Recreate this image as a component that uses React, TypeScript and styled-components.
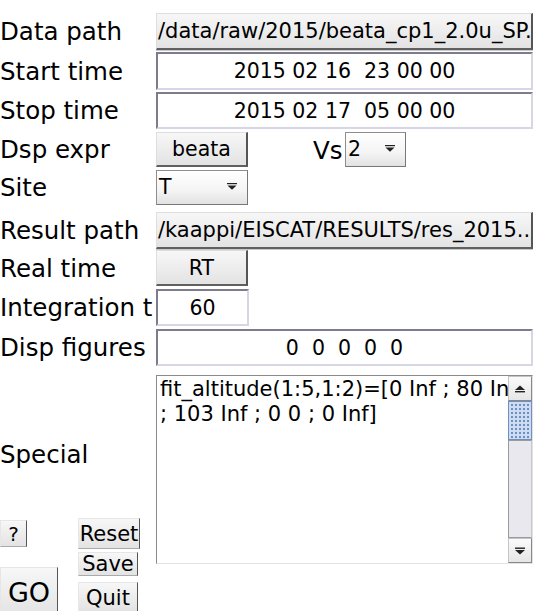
import React from "react";
import styled, { createGlobalStyle, css } from "styled-components";

const Global = createGlobalStyle`
  html, body { margin: 0; padding: 0; background: #ffffff; overflow: hidden; }
  body { font-family: "DejaVu Sans", "Liberation Sans", sans-serif; color: #000; }
`;

const Page = styled.div`
  width: 549px;
  height: 611px;
  overflow: hidden;
  padding-top: 13px;
  box-sizing: border-box;
  display: flex;
  flex-direction: column;
`;

const Row = styled.div<{ $h: number; $gap?: number }>`
  display: grid;
  grid-template-columns: 156px 377px;
  height: ${(p) => p.$h}px;
  margin-top: ${(p) => p.$gap ?? 0}px;
  flex-shrink: 0;
`;

const Label = styled.div`
  font-size: 24.5px;
  line-height: 28px;
  white-space: nowrap;
  overflow: hidden;
  align-self: center;
  margin-top: 1px;
`;

const Controls = styled.div`
  display: flex;
  align-items: stretch;
  min-width: 0;
`;

const buttonLook = css`
  box-sizing: border-box;
  background: linear-gradient(#f7f7f7, #e3e3e3);
  border-top: 1px solid #dedede;
  border-left: 1px solid #dedede;
  border-right: 2px solid #555;
  border-bottom: 2px solid #606060;
  font-family: "DejaVu Sans", "Liberation Sans", sans-serif;
  color: #000;
  padding: 0;
  white-space: nowrap;
  overflow: hidden;
`;

const WideButton = styled.div`
  ${buttonLook}
  width: 377px;
  font-size: 21px;
  line-height: 34px;
  padding-left: 1px;
  text-align: left;
  box-shadow: 0 1px 0 #c8c8c8;
`;

const SmallButton = styled.div<{ $w: number }>`
  ${buttonLook}
  width: ${(p) => p.$w}px;
  font-size: 20.5px;
  display: flex;
  align-items: center;
  justify-content: center;
`;

const Edit = styled.div<{ $w: number }>`
  box-sizing: border-box;
  width: ${(p) => p.$w}px;
  background: #fff;
  border-top: 2px solid #7c7c8c;
  border-left: 2px solid #7c7c8c;
  border-right: 2px solid #d6d6e4;
  border-bottom: 2px solid #d6d6e4;
  font-size: 20.5px;
  display: flex;
  align-items: center;
  justify-content: center;
  white-space: pre;
  overflow: hidden;
`;

const Popup = styled.div<{ $w: number }>`
  box-sizing: border-box;
  width: ${(p) => p.$w}px;
  background: linear-gradient(#ffffff, #f4f4f4 60%, #e2e2e2);
  border: 1px solid #8e8e8e;
  border-right-color: #777;
  border-bottom-color: #777;
  font-size: 20.5px;
  display: flex;
  align-items: center;
  justify-content: space-between;
  padding: 0 10px 2px 2px;
`;

const VsLabel = styled.div`
  font-size: 24.5px;
  line-height: 28px;
  align-self: center;
  margin-left: 65px;
  margin-right: 2px;
  width: 30px;
  margin-top: 2px;
`;

const Special = styled.div`
  display: grid;
  grid-template-columns: 156px 377px;
  margin-top: 9px;
  flex-shrink: 0;
`;

const LeftStack = styled.div`
  display: flex;
  flex-direction: column;
`;

const SpecialLabel = styled.div`
  font-size: 24.5px;
  line-height: 28px;
  margin-top: 66px;
`;

const Cluster = styled.div`
  display: grid;
  grid-template-columns: 58px 62px;
  column-gap: 20px;
  margin-top: 49px;
`;

const ClusterCol = styled.div`
  display: flex;
  flex-direction: column;
  align-items: flex-start;
`;

const MiniButton = styled.div<{ $w: number; $h: number; $gap?: number; $size?: number; $pad?: number }>`
  ${buttonLook}
  width: ${(p) => p.$w}px;
  height: ${(p) => p.$h}px;
  margin-top: ${(p) => p.$gap ?? 0}px;
  font-size: ${(p) => p.$size ?? 21}px;
  padding-top: ${(p) => p.$pad ?? 0}px;
  border-top-color: #e6e6e6;
  border-left-color: #e6e6e6;
  border-right: 1px solid #555;
  border-bottom: 1px solid #aaa;
  display: flex;
  align-items: center;
  justify-content: center;
`;

const TextArea = styled.div`
  box-sizing: border-box;
  height: 189px;
  width: 377px;
  background: #fff;
  border-top: 1px solid #8a8a8a;
  border-left: 1px solid #8a8a8a;
  border-right: 1px solid #e2e2e8;
  border-bottom: 1px solid #e2e2e8;
  display: flex;
`;

const TextBody = styled.div`
  flex: 1;
  min-width: 0;
  overflow: hidden;
  font-size: 21px;
  line-height: 25px;
  padding: 1px 0 0 3px;
  white-space: pre;
`;

const Scrollbar = styled.div`
  width: 24px;
  display: flex;
  flex-direction: column;
  background: #fff;
`;

const ArrowButton = styled.div`
  box-sizing: border-box;
  height: 25px;
  background: linear-gradient(#fafafa, #e6e6e6);
  border: 1px solid #c4c4c4;
  border-right-color: #888;
  border-bottom-color: #888;
  display: flex;
  align-items: center;
  justify-content: center;
`;

const Thumb = styled.div`
  box-sizing: border-box;
  height: 39px;
  border: 1px solid #6f8fbf;
  background-color: #cddcf0;
  background-image: radial-gradient(#6d8fc4 0.9px, transparent 1.1px);
  background-size: 4px 4px;
  background-position: 1px 1px;
`;

const Track = styled.div`
  flex: 1;
  box-sizing: border-box;
  background: #e8e8ee;
  border: 1px solid #9a9a9a;
  border-right-color: #c8c8c8;
`;

const PopArrow = () => (
  <svg width="10" height="7" viewBox="0 0 10 7">
    <rect x="0" y="0" width="10" height="1.2" fill="#222" />
    <polygon points="0.5,2.5 9.5,2.5 5,6.8" fill="#222" />
  </svg>
);

const ScrollArrow = ({ up }: { up?: boolean }) => (
  <svg width="12" height="8" viewBox="0 0 12 8">
    {up ? (
      <>
        <polygon points="1,5 11,5 6,0.5" fill="#222" />
        <rect x="1" y="6" width="10" height="1.4" fill="#222" />
      </>
    ) : (
      <>
        <rect x="1" y="0.5" width="10" height="1.4" fill="#222" />
        <polygon points="1,3 11,3 6,7.5" fill="#222" />
      </>
    )}
  </svg>
);

export default function App() {
  return (
    <>
      <Global />
      <Page>
        <Row $h={37}>
          <Label>Data path</Label>
          <Controls>
            <WideButton>/data/raw/2015/beata_cp1_2.0u_SP.</WideButton>
          </Controls>
        </Row>
        <Row $h={38} $gap={2}>
          <Label>Start time</Label>
          <Controls>
            <Edit $w={377}>{"2015 02 16  23 00 00"}</Edit>
          </Controls>
        </Row>
        <Row $h={37} $gap={2}>
          <Label>Stop time</Label>
          <Controls>
            <Edit $w={377}>{"2015 02 17  05 00 00"}</Edit>
          </Controls>
        </Row>
        <Row $h={35} $gap={3}>
          <Label>Dsp expr</Label>
          <Controls>
            <SmallButton $w={92}>beata</SmallButton>
            <VsLabel>Vs</VsLabel>
            <Popup $w={61}>
              <span>2</span>
              <PopArrow />
            </Popup>
          </Controls>
        </Row>
        <Row $h={35} $gap={3}>
          <Label>Site</Label>
          <Controls>
            <Popup $w={92}>
              <span>T</span>
              <PopArrow />
            </Popup>
          </Controls>
        </Row>
        <Row $h={37} $gap={7}>
          <Label>Result path</Label>
          <Controls>
            <WideButton>/kaappi/EISCAT/RESULTS/res_2015..</WideButton>
          </Controls>
        </Row>
        <Row $h={36} $gap={1}>
          <Label>Real time</Label>
          <Controls>
            <SmallButton $w={92}>RT</SmallButton>
          </Controls>
        </Row>
        <Row $h={37} $gap={3}>
          <Label>Integration t</Label>
          <Controls>
            <Edit $w={93}>60</Edit>
          </Controls>
        </Row>
        <Row $h={37} $gap={3}>
          <Label>Disp figures</Label>
          <Controls>
            <Edit $w={377}>{"0  0  0  0  0"}</Edit>
          </Controls>
        </Row>
        <Special>
          <LeftStack>
            <SpecialLabel>Special</SpecialLabel>
            <Cluster>
              <ClusterCol>
                <MiniButton $w={27} $h={27} $gap={2} $size={20}>?</MiniButton>
                <MiniButton $w={58} $h={50} $gap={20} $size={27}>GO</MiniButton>
              </ClusterCol>
              <ClusterCol>
                <MiniButton $w={62} $h={31}>Reset</MiniButton>
                <MiniButton $w={60} $h={24} $gap={3}>Save</MiniButton>
                <MiniButton $w={60} $h={30} $gap={6} $pad={2}>{" Quit"}</MiniButton>
              </ClusterCol>
            </Cluster>
          </LeftStack>
          <TextArea>
            <TextBody>
              {"fit_altitude(1:5,1:2)=[0 Inf ; 80 Inf\n; 103 Inf ; 0 0 ; 0 Inf]"}
            </TextBody>
            <Scrollbar>
              <ArrowButton>
                <ScrollArrow up />
              </ArrowButton>
              <Thumb />
              <Track />
              <ArrowButton>
                <ScrollArrow />
              </ArrowButton>
            </Scrollbar>
          </TextArea>
        </Special>
      </Page>
    </>
  );
}
